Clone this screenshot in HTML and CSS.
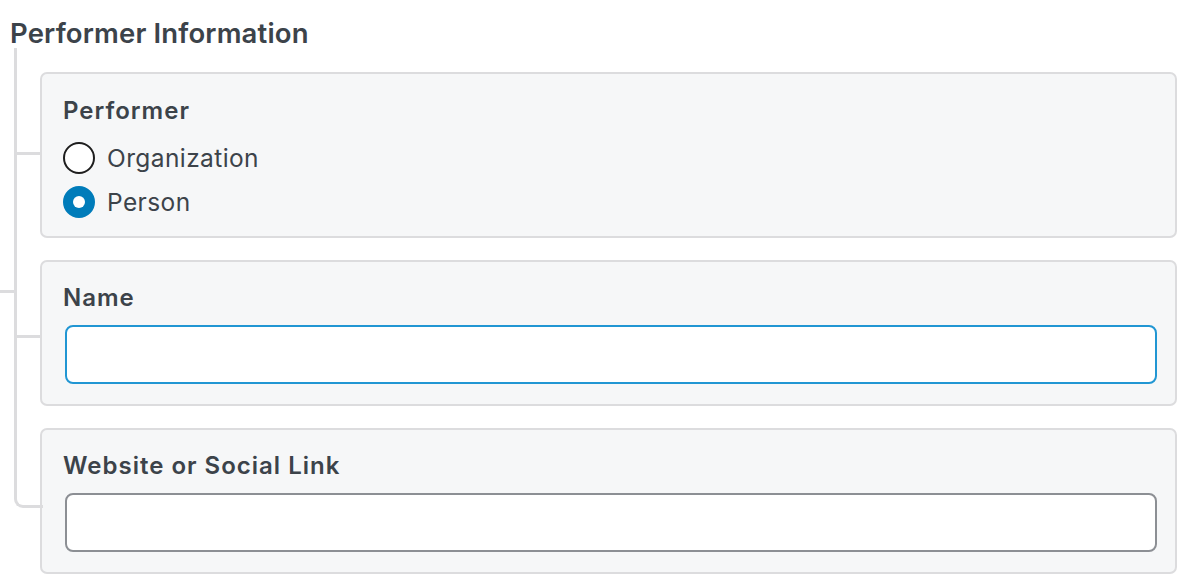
FILE: index.html
```html
<!DOCTYPE html>
<html lang="en">
<head>
    <meta charset="UTF-8">
    <meta name="viewport" content="width=device-width, initial-scale=1.0">
    <title>Performer Information</title>
    <link rel="stylesheet" href="styles.css">
</head>
<body>
    <div class="section">
        <h2 class="section-title">Performer Information</h2>
        <div class="tree">
            <div class="node node-choice">
                <p class="field-label">Performer</p>
                <label class="radio-row">
                    <input type="radio" name="performer" value="organization">
                    <span>Organization</span>
                </label>
                <label class="radio-row">
                    <input type="radio" name="performer" value="person" checked>
                    <span>Person</span>
                </label>
            </div>
            <div class="node">
                <label class="field-label" for="performerName">Name</label>
                <input type="text" id="performerName" class="text-field is-focused">
            </div>
            <div class="node">
                <label class="field-label" for="performerLink">Website or Social Link</label>
                <input type="text" id="performerLink" class="text-field">
            </div>
        </div>
    </div>
</body>
</html>
```

FILE: styles.css
```css
body {
    font-family: Inter, "Noto Sans", sans-serif;
    margin: 0;
    background-color: #fff;
    color: #3c434a;
}
.section-title {
    margin: 0;
    padding: 19px 0 0 10px;
    font-size: 27.5px;
    line-height: 29px;
    font-weight: 600;
    letter-spacing: 0.15px;
    color: #3c434a;
}
.tree {
    position: relative;
    margin: 0 17px 0 14px;
    padding: 24px 0 0 26px;
}
/* connector coming in from the parent */
.tree::after {
    content: "";
    position: absolute;
    left: -14px;
    top: 242px;
    width: 14px;
    height: 3px;
    background: #dcdcde;
}
.node {
    position: relative;
    background: #f6f7f8;
    border: 2px solid #dcdcde;
    border-radius: 7px;
    padding: 21px 19px 20px 22px;
    margin-bottom: 22px;
}
.node::before {
    content: "";
    position: absolute;
    left: -28px;
    top: -26px;
    bottom: -2px;
    width: 3px;
    background: #dcdcde;
}
.node::after {
    content: "";
    position: absolute;
    left: -25px;
    top: 73px;
    width: 25px;
    height: 3px;
    background: #dcdcde;
}
.node:first-child::after {
    top: 78px;
}
.node:last-child::before {
    bottom: auto;
    height: 101px;
    width: 26px;
    background: none;
    border-left: 3px solid #dcdcde;
    border-bottom: 3px solid #dcdcde;
    border-bottom-left-radius: 9px;
}
.node:last-child::after {
    display: none;
}
.node-choice {
    padding-top: 22px;
    padding-bottom: 12px;
}
.field-label {
    display: block;
    margin: 0 0 12px -1px;
    font-size: 24px;
    line-height: 30px;
    font-weight: 600;
    letter-spacing: 1px;
}
.node-choice .field-label {
    margin-bottom: 10px;
}
.radio-row {
    display: flex;
    align-items: center;
    gap: 12px;
    height: 44px;
    font-size: 24.5px;
    letter-spacing: 0.4px;
    cursor: pointer;
}
.radio-row input {
    appearance: none;
    margin: 0 0 0 -1px;
    width: 32px;
    height: 32px;
    border: 2px solid #1e1e1e;
    border-radius: 50%;
    background: #fff;
    display: flex;
    align-items: center;
    justify-content: center;
}
.radio-row input:checked {
    background: #007cba;
    border-color: #007cba;
}
.radio-row input:checked::before {
    content: "";
    width: 12px;
    height: 12px;
    border-radius: 50%;
    background: #fff;
}
.text-field {
    display: block;
    box-sizing: border-box;
    width: 100%;
    height: 59px;
    margin: 0 0 0 1px;
    padding: 0 16px;
    border: 2px solid #8c8f94;
    border-radius: 8px;
    background: #fff;
    font-family: inherit;
    font-size: 22px;
    color: #2c3338;
    outline: none;
}
.text-field.is-focused,
.text-field:focus {
    border-color: #2196d3;
}
```
